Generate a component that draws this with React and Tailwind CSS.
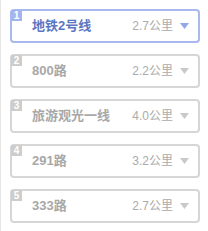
const routes = [
  { name: "地铁2号线", dist: "2.7公里" },
  { name: "800路", dist: "2.2公里" },
  { name: "旅游观光一线", dist: "4.0公里" },
  { name: "291路", dist: "3.2公里" },
  { name: "333路", dist: "2.7公里" },
];

function RouteCard({ index, name, dist, active }) {
  return (
    <div
      className={
        "relative flex h-[34px] items-center rounded-[4px] border-2 pl-[20px] pr-[9px] " +
        (active ? "border-[#a9b8ee]" : "border-[#d6d6d6]")
      }
    >
      <span
        className={
          "absolute left-[-1px] top-[-1px] flex h-[11px] w-[11px] items-center justify-center text-[10px] font-bold leading-none text-white " +
          (active ? "bg-[#a3b5f0]" : "bg-[#cdcdcd]")
        }
      >
        {index}
      </span>
      <span
        className={
          "flex-1 text-[13px] font-bold " +
          (active ? "text-[#5d76c2]" : "text-[#a8a8a8]")
        }
      >
        {name}
      </span>
      <span className="text-[12px] text-[#ababab]">{dist}</span>
      <svg width="9" height="6" viewBox="0 0 9 6" className="ml-[7px]">
        <path d="M0 0h9L4.5 6z" fill={active ? "#90a7e8" : "#c9c9c9"} />
      </svg>
    </div>
  );
}

export default function App() {
  return (
    <div
      className="h-[231px] w-[208px] border-l border-[#e6e6e6] bg-white pl-[9px] pr-[8px] pt-[9px]"
      style={{ fontFamily: '"Liberation Sans", "Noto Sans CJK SC", sans-serif' }}
    >
      <div className="flex flex-col gap-[11px]">
        {routes.map((r, i) => (
          <RouteCard key={i} index={i + 1} name={r.name} dist={r.dist} active={i === 0} />
        ))}
      </div>
    </div>
  );
}
